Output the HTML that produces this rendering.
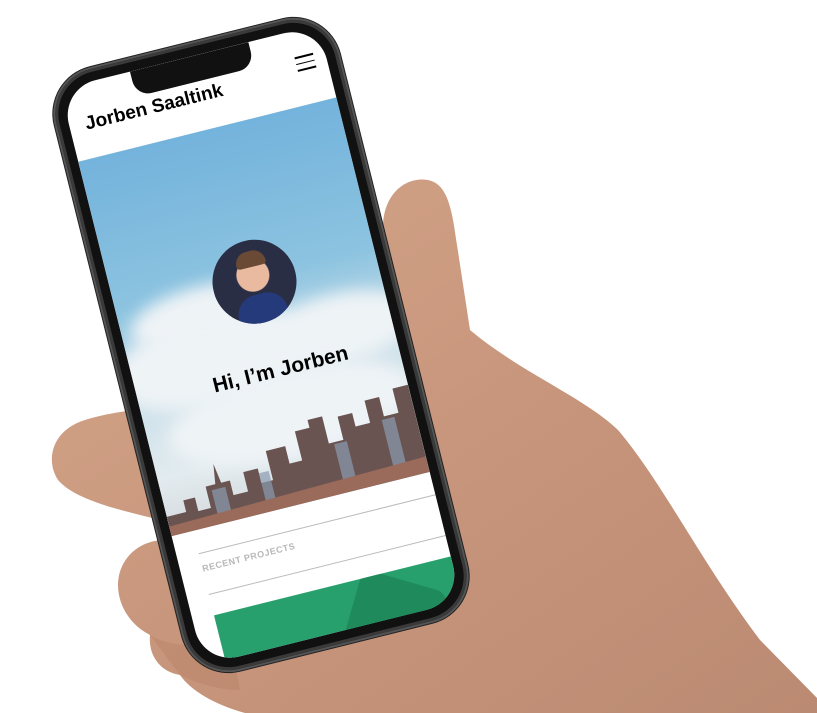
<!DOCTYPE html>
<html><head><meta charset="utf-8"><style>
html,body{margin:0;padding:0;width:817px;height:713px;overflow:hidden;background:#fff;font-family:"Liberation Sans",sans-serif}
#hand{position:absolute;left:0;top:0}
.phone{position:absolute;left:116px;top:36px;width:290px;height:618px;transform:rotate(-14deg);transform-origin:145px 309px;background:#111;border-radius:46px;box-shadow:0 0 0 2px #555,0 0 0 3px #222,inset 0 0 0 3px #3a3a3a}
.screen{position:absolute;left:12px;top:12px;right:12px;bottom:12px;border-radius:36px;overflow:hidden;background:#fff}
.notch{position:absolute;left:72px;top:0;width:122px;height:26px;background:#111;border-radius:0 0 16px 16px}
.title{position:absolute;left:16px;top:30px;font-weight:bold;font-size:19px;color:#000}
.ham{position:absolute;right:12px;top:26px;width:19px}
.ham i{display:block;height:1.6px;background:#000;margin-bottom:5px}
.hero{position:absolute;left:0;right:0;top:75px;height:386px;background:linear-gradient(#74b3dc 0%,#8cc3e0 40%,#c9dfe9 62%,#e2ebef 85%,#d5dadd 100%);overflow:hidden}
.cloud{position:absolute;background:#eef3f6;border-radius:50%;filter:blur(8px)}
.avatar{position:absolute;left:100px;top:192px;width:84px;height:84px;border-radius:50%;background:radial-gradient(circle at 50% 42%,#e9b9a0 0 16px,transparent 17px),linear-gradient(90deg,#2a2e45 0,#2a2e45 100%);overflow:hidden}
.avatar:after{content:"";position:absolute;left:18px;top:55px;width:50px;height:40px;border-radius:20px 20px 0 0;background:#243a7a}
.avatar:before{content:"";position:absolute;left:28px;top:11px;width:30px;height:16px;border-radius:14px 14px 4px 4px;background:#6a4a35}
.hi{position:absolute;left:0;right:0;top:314px;text-align:center;font-weight:bold;font-size:21px;color:#000;padding-left:26px}
.rp{position:absolute;left:22px;top:495px;font-size:9px;font-weight:bold;color:#b8b8b8;letter-spacing:.5px}
.line{position:absolute;left:22px;right:0;height:1px;background:#bbb}
.green{position:absolute;left:22px;right:0;top:548px;height:60px;background:#27a06d;overflow:hidden}
</style></head><body>
<svg id="hand" width="817" height="713" viewBox="0 0 817 713">
<defs><linearGradient id="sk" x1="0" y1="0" x2="1" y2="1"><stop offset="0" stop-color="#d4a68a"/><stop offset=".5" stop-color="#c8967c"/><stop offset="1" stop-color="#bb8a72"/></linearGradient></defs>
<path fill="url(#sk)" d="M383,230 C382,195 405,176 428,180 C448,184 452,210 457,245 L470,330 C520,372 585,398 618,430 C662,482 700,560 760,640 L817,698 L817,713 L245,713 C215,705 190,690 180,675 C160,672 148,655 150,635 C130,625 118,605 118,585 C118,560 138,540 165,540 L160,520 C120,510 75,500 58,480 C45,460 52,430 85,420 C110,412 140,410 160,405 L380,300 Z"/>
<path fill="#b27a62" opacity=".35" d="M150,635 C165,645 200,650 230,640 L240,690 C215,690 190,680 180,675 Z"/>
</svg>
<div class="phone"><div class="screen">
<div class="hero">
<div class="cloud" style="left:10px;top:150px;width:150px;height:60px"></div>
<div class="cloud" style="left:-20px;top:180px;width:200px;height:90px"></div>
<div class="cloud" style="left:130px;top:190px;width:160px;height:70px"></div>
<div class="cloud" style="left:20px;top:250px;width:250px;height:90px"></div>
<svg style="position:absolute;left:0;bottom:0" width="266" height="90" viewBox="0 0 266 90">
<path fill="#6a5452" d="M0,90 L0,70 L20,70 L20,58 L32,58 L32,72 L45,72 L45,50 L55,50 L58,30 L61,50 L70,50 L70,65 L85,65 L85,45 L100,45 L100,60 L112,60 L112,30 L132,30 L132,48 L145,48 L145,18 L160,18 L160,10 L175,10 L175,38 L190,38 L190,14 L205,14 L205,28 L220,28 L220,5 L235,5 L235,25 L250,25 L250,0 L266,0 L266,90 Z"/>
<path fill="#8a9bb0" opacity=".7" d="M50,90 L50,55 L64,55 L64,90 Z M100,90 L100,50 L110,50 L110,90Z M180,90 L180,40 L193,40 L193,90Z M232,90 L232,28 L245,28 L245,90Z"/>
<path fill="#9a6a5a" d="M0,90 L0,80 L266,74 L266,90Z"/>
</svg>
</div>
<div class="notch"></div>
<div class="title">Jorben Saaltink</div>
<div class="ham"><i></i><i></i><i></i></div>
<div class="avatar"></div>
<div class="hi">Hi, I’m Jorben</div>
<div class="line" style="top:484px"></div>
<div class="rp">RECENT PROJECTS</div>
<div class="line" style="top:526px"></div>
<div class="green"><div style="position:absolute;left:130px;top:8px;width:90px;height:80px;border-radius:14px;background:#1f8a5c;transform:rotate(30deg)"></div></div>
</div></div>
</body></html>
